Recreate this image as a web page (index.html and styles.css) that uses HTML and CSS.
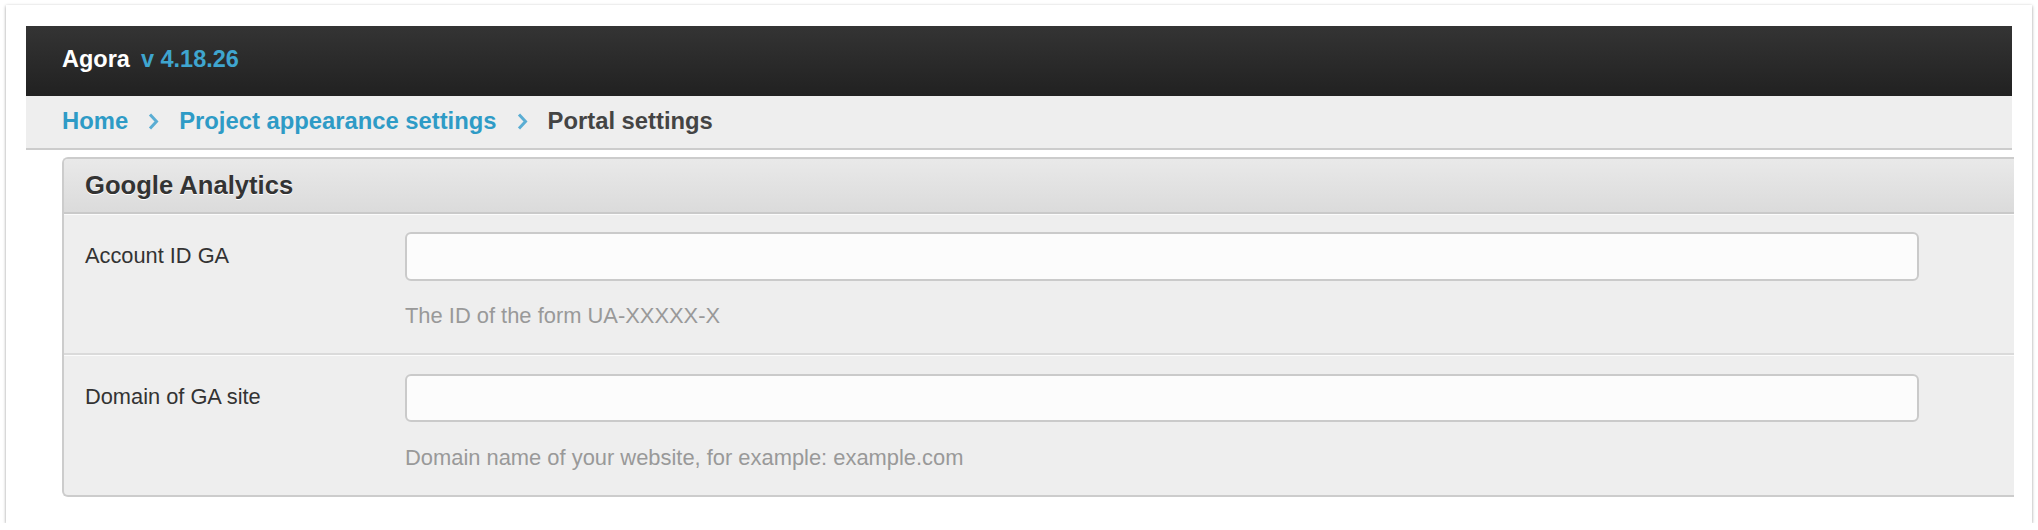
FILE: index.html
```html
<!DOCTYPE html>
<html>
<head>
<meta charset="utf-8">
<title>Portal settings</title>
<link rel="stylesheet" href="styles.css">
</head>
<body>
<div class="frame">
  <div class="app">
    <div class="topbar">
      <span class="brand">Agora</span>
      <span class="version">v 4.18.26</span>
    </div>
    <div class="crumbs">
      <a class="crumb-link" href="#">Home</a>
      <svg class="chev" width="11" height="17" viewBox="0 0 11 17"><polyline points="2,1.5 8.5,8.5 2,15.5" fill="none" stroke="#5aadd3" stroke-width="3"/></svg>
      <a class="crumb-link" href="#">Project appearance settings</a>
      <svg class="chev" width="11" height="17" viewBox="0 0 11 17"><polyline points="2,1.5 8.5,8.5 2,15.5" fill="none" stroke="#5aadd3" stroke-width="3"/></svg>
      <span class="crumb-current">Portal settings</span>
    </div>
    <div class="panel">
      <div class="panel-head">Google Analytics</div>
      <div class="row">
        <label class="label">Account ID GA</label>
        <div class="field">
          <input class="input" type="text">
          <div class="hint">The ID of the form UA-XXXXX-X</div>
        </div>
      </div>
      <div class="row row-last">
        <label class="label">Domain of GA site</label>
        <div class="field">
          <input class="input" type="text">
          <div class="hint">Domain name of your website, for example: example.com</div>
        </div>
      </div>
    </div>
  </div>
</div>
</body>
</html>
```

FILE: styles.css
```css
html, body {
  margin: 0;
  padding: 0;
  background: #ffffff;
}
body {
  font-family: "Liberation Sans", Arial, Helvetica, sans-serif;
  color: #333;
}
.frame {
  margin: 5px 0 0 6px;
  width: 2026px;
  height: 518px;
  box-sizing: border-box;
  padding: 21px 20px 0 20px;
  background: #fff;
  box-shadow: 0 1px 3px rgba(0, 0, 0, 0.4);
}
.app {
  width: 1986px;
}
.topbar {
  height: 70px;
  box-sizing: border-box;
  padding: 0 0 3px 36px;
  line-height: 67px;
  background: linear-gradient(#343434, #212121);
  display: flex;
  gap: 11px;
  font-weight: bold;
  font-size: 23.5px;
}
.brand {
  color: #ffffff;
}
.version {
  color: #3fa5cf;
}
.crumbs {
  height: 54px;
  box-sizing: border-box;
  padding: 0 0 2px 36px;
  line-height: 50px;
  background: #eeeeee;
  border-bottom: 2px solid #cccccc;
  display: flex;
  align-items: center;
  gap: 20px;
  font-size: 23.8px;
  font-weight: bold;
}
.crumb-link {
  color: #2e9bc6;
  text-decoration: none;
}
.chev {
  display: block;
  margin-top: 1px;
}
.crumb-current {
  color: #444444;
}
.panel {
  margin: 6.7px 0 0 36px;
  width: 1950px;
  background: #eeeeee;
  border: 2px solid #cccccc;
  border-right: none;
  border-radius: 6px 0 0 6px;
  overflow: hidden;
}
.panel-head {
  height: 53.3px;
  line-height: 53.3px;
  padding-left: 21px;
  font-size: 25.6px;
  font-weight: bold;
  color: #333333;
  text-shadow: 0 1px 0 #ffffff;
  background: linear-gradient(#e9e9e9, #dbdbdb);
  border-bottom: 2px solid #c9c9c9;
}
.row {
  display: grid;
  grid-template-columns: 320px 1514px;
  padding: 17.5px 0 24px 21px;
  border-top: 1px solid #fbfbfb;
  border-bottom: 2px solid #dadada;
}
.row-last {
  border-bottom: none;
}
.label {
  padding-top: 10.5px;
  line-height: 26px;
  font-size: 21.8px;
  color: #333333;
}
.field {
  display: flex;
  flex-direction: column;
}
.input {
  display: block;
  width: 1514px;
  height: 48.5px;
  box-sizing: border-box;
  margin: 0;
  border: 2px solid #cacaca;
  border-radius: 6px;
  background: #fcfcfc;
  font-family: inherit;
  font-size: 21.8px;
  outline: none;
}
.hint {
  margin-top: 22.5px;
  line-height: 26px;
  font-size: 21.9px;
  color: #999999;
}
```
